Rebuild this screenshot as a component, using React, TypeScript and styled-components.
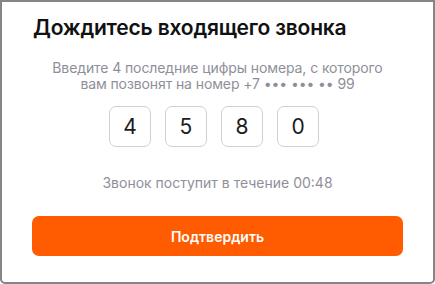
import styled, {createGlobalStyle} from "styled-components";

const GlobalStyle = createGlobalStyle`
    html, body {
        margin: 0;
        padding: 0;
        background: #ffffff;
    }
    * {
        box-sizing: border-box;
    }
`;

const Frame = styled.div`
    width: 435px;
    height: 284px;
    border: 2px solid #858585;
    border-radius: 0 0 5px 5px;
    background: #ffffff;
    padding: 13px 30px 0 30px;
    display: flex;
    flex-direction: column;
    font-family: Inter, "Noto Sans", sans-serif;
`;

const Title = styled.h1`
    margin: 0 0 0 1px;
    font-size: 21px;
    font-weight: 600;
    line-height: 26px;
    letter-spacing: -0.2px;
    color: #111111;
`;

const Hint = styled.p`
    margin: 19px 0 0 0;
    font-size: 14px;
    line-height: 16px;
    letter-spacing: -0.1px;
    color: #8f8f9a;
    text-align: center;
`;

const Digits = styled.div`
    display: flex;
    justify-content: center;
    gap: 14px;
    margin-top: 14px;
    padding-right: 7px;
`;

const Digit = styled.div`
    width: 42px;
    height: 41px;
    border: 1px solid #cfcfd8;
    border-radius: 7px;
    display: flex;
    align-items: center;
    justify-content: center;
    font-size: 21px;
    color: #1c1c1c;
`;

const Timer = styled.p`
    margin: 28px 0 0 0;
    font-size: 14px;
    line-height: 16px;
    color: #8f8f9a;
    text-align: center;
`;

const Submit = styled.button`
    margin-top: 25px;
    width: 100%;
    height: 40px;
    border: none;
    border-radius: 7px;
    background: #ff5b00;
    color: #ffffff;
    font-family: Inter, "Noto Sans", sans-serif;
    font-size: 14px;
    font-weight: 600;
    cursor: pointer;
`;

const code = ["4", "5", "8", "0"];

function App() {
    return (
        <>
            <GlobalStyle />
            <Frame>
                <Title>Дождитесь входящего звонка</Title>
                <Hint>
                    Введите 4 последние цифры номера, с которого
                    <br />
                    вам позвонят на номер +7 ••• ••• •• 99
                </Hint>
                <Digits>
                    {code.map((d, i) => (
                        <Digit key={i}>{d}</Digit>
                    ))}
                </Digits>
                <Timer>Звонок поступит в течение 00:48</Timer>
                <Submit>Подтвердить</Submit>
            </Frame>
        </>
    );
}

export default App;
